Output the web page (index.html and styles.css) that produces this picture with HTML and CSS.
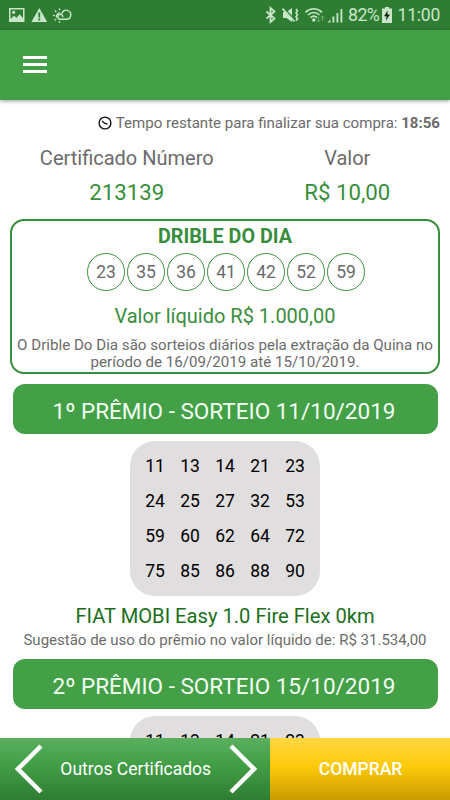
FILE: index.html
```html
<!DOCTYPE html>
<html lang="pt-BR">
<head>
<meta charset="utf-8">
<title>Certificado</title>
<link rel="stylesheet" href="styles.css">
</head>
<body>
<div class="app">
  <div class="status">
    <svg class="status-left" width="64" height="18" viewBox="0 0 64 18">
      <path fill="#c9e6ca" fill-rule="evenodd" d="M1 2h15.500v14H1zM2.500 3.500v9.500l3.400-3.300 2.700 2.100 3-3.500 3.400 3.800V3.500z"/>
      <circle cx="5.600" cy="6.300" r="1.600" fill="#c9e6ca"/>
      <path fill="#c9e6ca" fill-rule="evenodd" d="M31.300 2l7.900 14H23.400zM30.300 6.500v5h1.900v-5zM30.300 12.500v2h1.900v-2z"/>
      <g fill="none" stroke="#c9e6ca" stroke-width="1.400" stroke-linecap="round" stroke-linejoin="round">
        <path d="M54 7.200a4.500 4.500 0 1 1 4.100 6H52.300a2.400 2.400 0 1 1 2.400-2.600"/>
        <path d="M48.500 11a3.500 3.500 0 0 1 3.300-4"/>
        <path d="M51.500 3v.8M47.300 4.900l.6.600M45.600 9.500h.6M47 14l.6-.6M51.500 15.800v.5"/>
      </g>
    </svg>
    <div class="status-right">
      <svg class="signals" width="82" height="18" viewBox="0 0 82 18">
        <path d="M1.500 5.500l8 7L5.500 16V2l4 3.500-8 7" fill="none" stroke="#c9e6ca" stroke-width="1.800"/>
        <path d="M18 6h3.500L27 2v14l-5.500-4H18z" fill="#c9e6ca"/>
        <path d="M19 2l12 13.500" stroke="#2e7d32" stroke-width="1.400"/>
        <path d="M17.500 2.700L29.500 15.500" stroke="#c9e6ca" stroke-width="1.700"/>
        <path d="M31 3l1.500 1.700-1.500 2 1.500 2-1.500 2 1.500 2-1.500 2" fill="none" stroke="#c9e6ca" stroke-width="1.600"/>
        <g fill="none" stroke="#c9e6ca" stroke-width="1.600">
          <path d="M40.500 6.300c5-4.700 11.500-4.700 16.500 0M43 9c3.500-3.200 8-3.200 11.500 0M45.500 11.600c2-1.800 4.500-1.800 6.500 0"/>
        </g>
        <circle cx="48.800" cy="14" r="1.700" fill="#c9e6ca"/>
        <path d="M53.500 11v5m-1.600-1.600 1.600 1.700 1.600-1.700M57.500 15v-5m-1.600 1.600 1.600-1.700 1.600 1.700" fill="none" stroke="#6bad6e" stroke-width="1"/>
        <path d="M62.500 16.500l3-3v3zM67.500 10.500h1.800v6h-1.800zM71.500 7h1.800v9.500h-1.800zM75.500 3h1.800v13.500h-1.800z" fill="#c9e6ca"/>
      </svg>
      <span class="pct">82%</span>
      <svg class="battery" width="10" height="16" viewBox="0 0 10 16">
        <path d="M3 0h4v1.500h3V16H0V1.500h3z" fill="#c9e6ca"/>
        <path d="M5.700 3.500L2 9.300h2.500L4 13.500 8 7.500H5.400z" fill="#10250f"/>
      </svg>
      <span class="clock">11:00</span>
    </div>
  </div>
  <header class="toolbar">
    <div class="menu"><i></i><i></i><i></i></div>
  </header>
  <main class="content">
    <div class="timer">
      <svg width="14" height="14" viewBox="0 0 14 14"><circle cx="7" cy="7" r="5.900" fill="none" stroke="#111" stroke-width="1.400"/><path d="M4 5l3 2.500 2.600.6" fill="none" stroke="#111" stroke-width="1.300"/></svg>
      <span>Tempo restante para finalizar sua compra: <b>18:56</b></span>
    </div>
    <div class="summary">
      <div class="col-number"><div class="label">Certificado Número</div><div class="value">213139</div></div>
      <div class="col-price"><div class="label">Valor</div><div class="value">R$ 10,00</div></div>
    </div>
    <section class="daily">
      <h2>DRIBLE DO DIA</h2>
      <div class="balls"><span>23</span><span>35</span><span>36</span><span>41</span><span>42</span><span>52</span><span>59</span></div>
      <div class="net">Valor líquido R$ 1.000,00</div>
      <p>O Drible Do Dia são sorteios diários pela extração da Quina no<br>período de 16/09/2019 até 15/10/2019.</p>
    </section>
    <h3 class="prize">1º PRÊMIO - SORTEIO 11/10/2019</h3>
    <div class="numbers">
      <span>11</span><span>13</span><span>14</span><span>21</span><span>23</span>
      <span>24</span><span>25</span><span>27</span><span>32</span><span>53</span>
      <span>59</span><span>60</span><span>62</span><span>64</span><span>72</span>
      <span>75</span><span>85</span><span>86</span><span>88</span><span>90</span>
    </div>
    <div class="item">FIAT MOBI Easy 1.0 Fire Flex 0km</div>
    <div class="hint">Sugestão de uso do prêmio no valor líquido de: R$ 31.534,00</div>
    <h3 class="prize">2º PRÊMIO - SORTEIO 15/10/2019</h3>
    <div class="numbers">
      <span>11</span><span>13</span><span>14</span><span>21</span><span>23</span>
    </div>
  </main>
  <footer class="actions">
    <div class="others">
      <svg width="28" height="50" viewBox="0 0 28 50"><path d="M26 2L3 25l23 23" fill="none" stroke="#fff" stroke-width="4.500"/></svg>
      <span>Outros Certificados</span>
      <svg width="28" height="50" viewBox="0 0 28 50"><path d="M2 2l23 23L2 48" fill="none" stroke="#fff" stroke-width="4.500"/></svg>
    </div>
    <div class="buy">COMPRAR</div>
  </footer>
</div>
</body>
</html>
```
FILE: styles.css
```css
* { box-sizing: border-box; }
body { margin: 0; background: #fff; font-family: Roboto, "Liberation Sans", sans-serif; color: #6b6b6b; }
.app { width: 450px; height: 800px; display: flex; flex-direction: column; overflow: hidden; }

.status { flex: none; height: 30px; background: #2e7d32; color: #c9e6ca; display: flex; justify-content: space-between; align-items: center; padding: 0 10.500px 0 8px; }
.status-right { display: flex; align-items: center; line-height: 32px; }
.signals { margin-right: 1px; }
.pct { width: 31px; white-space: nowrap; font-size: 17.800px; letter-spacing: -.6px; }
.battery { margin: 0 5.500px 0 3px; }
.clock { font-size: 17.500px; width: 42px; white-space: nowrap; letter-spacing: -.2px; }

.toolbar { flex: none; height: 70px; background: #43a047; display: flex; align-items: center; padding-left: 23px; box-shadow: 0 1px 4px rgba(0, 0, 0, .4); }
.menu { width: 24px; display: grid; gap: 4.500px; margin-top: -1px; }
.menu i { height: 2.500px; background: #fff; }

.content { flex: 1; min-height: 0; overflow: hidden; padding: 12.500px 10px 0; text-align: center; }
.timer { height: 20px; display: flex; justify-content: flex-end; align-items: center; gap: 4px; font-size: 15.060px; white-space: nowrap; }
.summary { display: flex; height: 86.500px; padding-top: 12.500px; }
.col-number { width: 234px; padding-left: 5px; }
.col-price { width: 206px; padding-left: 16px; }
.label { font-size: 20px; line-height: 27px; }
.value { font-size: 22.200px; line-height: 41px; color: #388e3c; }

.daily { height: 155px; border: 2.500px solid #388e3c; border-radius: 14px; color: #6b6b6b; }
h2 { margin: 0; font-size: 19.800px; line-height: 31px; height: 30px; font-weight: 700; color: #388e3c; }
.balls { display: flex; justify-content: center; gap: 2.500px; margin: 2px 0 0 2px; }
.balls span { width: 37.500px; height: 37.500px; border: 1px solid #388e3c; border-radius: 50%; font-size: 17.500px; line-height: 37.500px; }
.net { font-size: 20px; line-height: 24px; margin-top: 13px; color: #388e3c; }
.daily p { margin: 9px -4px 0; font-size: 15.130px; line-height: 17.900px; white-space: nowrap; }

.prize { margin: 10px 2.500px 0; padding-right: 2px; height: 50px; background: #43a047; color: #f4fff4; border-radius: 12px; font-size: 22.500px; line-height: 54px; font-weight: 400; }
.numbers { width: 190px; height: 155px; margin: 7px auto 0; padding: 8px 7.500px; border-radius: 25px; background: #e0dedf; display: grid; grid-template-columns: repeat(5, 35px); grid-auto-rows: 35px; color: #000; font-size: 17.500px; line-height: 35px; }
.item { margin-top: 8px; font-size: 20.150px; line-height: 24px; color: #1b6e20; }
.hint { margin-top: 1px; font-size: 15.030px; line-height: 22px; white-space: nowrap; }
.hint + .prize { margin-top: 8px; }

.actions { flex: none; height: 62.500px; display: flex; color: #fff; font-size: 17.500px; }
.others { width: 270px; padding: 0 12.500px 0 15px; display: flex; align-items: center; justify-content: space-between; background: linear-gradient(#5baf5f, #43a047 40%, #2e7d32); }
.others span { margin-right: 1px; padding-top: 1px; }
.buy { flex: 1; display: flex; align-items: center; justify-content: center; padding: 1px 0 0 1px; font-weight: 500; background: linear-gradient(#ffd740, #ffca0a 45%, #c89b00); }
```
